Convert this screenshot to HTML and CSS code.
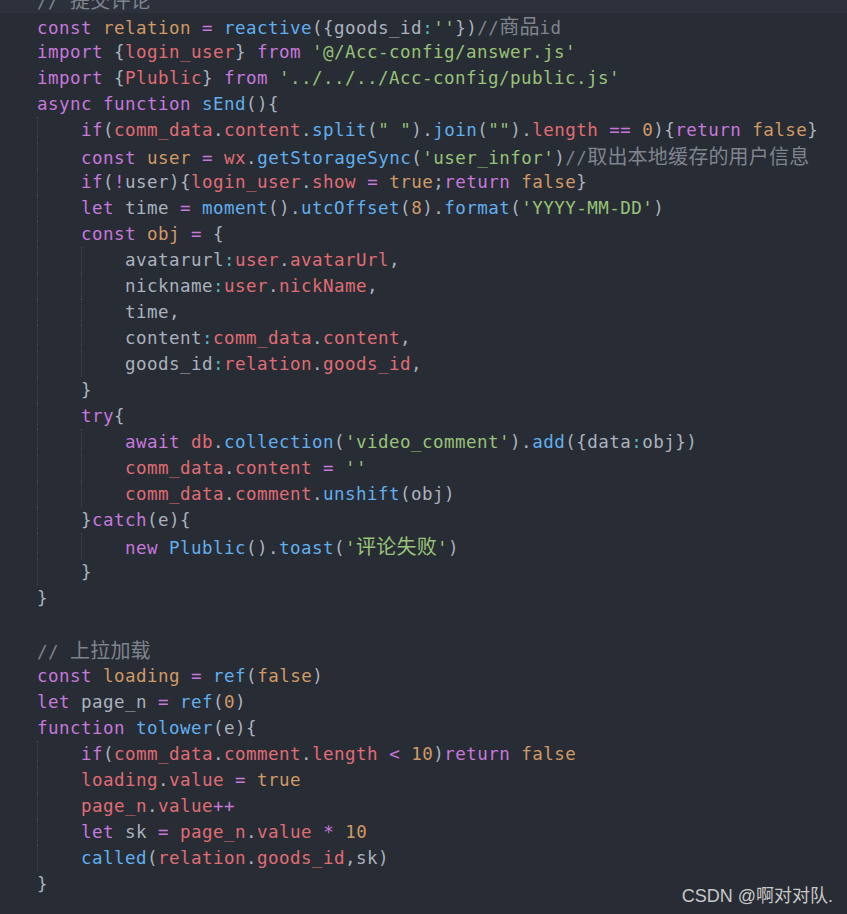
FILE: index.html
```html
<!DOCTYPE html>
<html lang="zh">
<head>
<meta charset="utf-8">
<title>code</title>
<link rel="stylesheet" href="styles.css">
</head>
<body>
<div class="editor">
<div class="code">
<div class="line cur"><span class="c">// <span class="zh">提交评论</span></span></div>
<div class="line"><span class="k">const</span> <span class="v">relation</span> <span class="o">=</span> <span class="f">reactive</span>({goods_id<span class="p">:</span><span class="s">''</span>})<span class="c">//<span class="zh">商品</span>id</span></div>
<div class="line"><span class="k">import</span> {<span class="r">login_user</span>} <span class="k">from</span> <span class="s">'@/Acc-config/answer.js'</span></div>
<div class="line"><span class="k">import</span> {<span class="r">Plublic</span>} <span class="k">from</span> <span class="s">'../../../Acc-config/public.js'</span></div>
<div class="line"><span class="k">async</span> <span class="k">function</span> <span class="f">sEnd</span>(){</div>
<div class="line"><span class="ind"></span><span class="k">if</span>(<span class="r">comm_data</span>.<span class="r">content</span>.<span class="f">split</span>(<span class="s">" "</span>).<span class="f">join</span>(<span class="s">""</span>).<span class="r">length</span> <span class="o">==</span> <span class="v">0</span>){<span class="k">return</span> <span class="v">false</span>}</div>
<div class="line"><span class="ind"></span><span class="k">const</span> <span class="v">user</span> <span class="o">=</span> <span class="r">wx</span>.<span class="f">getStorageSync</span>(<span class="s">'user_infor'</span>)<span class="c">//<span class="zh">取出本地缓存的用户信息</span></span></div>
<div class="line"><span class="ind"></span><span class="k">if</span>(<span class="o">!</span>user){<span class="r">login_user</span>.<span class="r">show</span> <span class="o">=</span> <span class="v">true</span>;<span class="k">return</span> <span class="v">false</span>}</div>
<div class="line"><span class="ind"></span><span class="k">let</span> time <span class="o">=</span> <span class="f">moment</span>().<span class="f">utcOffset</span>(<span class="v">8</span>).<span class="f">format</span>(<span class="s">'YYYY-MM-DD'</span>)</div>
<div class="line"><span class="ind"></span><span class="k">const</span> <span class="v">obj</span> <span class="o">=</span> {</div>
<div class="line"><span class="ind"></span><span class="ind"></span>avatarurl<span class="p">:</span><span class="r">user</span>.<span class="r">avatarUrl</span>,</div>
<div class="line"><span class="ind"></span><span class="ind"></span>nickname<span class="p">:</span><span class="r">user</span>.<span class="r">nickName</span>,</div>
<div class="line"><span class="ind"></span><span class="ind"></span>time,</div>
<div class="line"><span class="ind"></span><span class="ind"></span>content<span class="p">:</span><span class="r">comm_data</span>.<span class="r">content</span>,</div>
<div class="line"><span class="ind"></span><span class="ind"></span>goods_id<span class="p">:</span><span class="r">relation</span>.<span class="r">goods_id</span>,</div>
<div class="line"><span class="ind"></span>}</div>
<div class="line"><span class="ind"></span><span class="k">try</span>{</div>
<div class="line"><span class="ind"></span><span class="ind"></span><span class="k">await</span> <span class="r">db</span>.<span class="f">collection</span>(<span class="s">'video_comment'</span>).<span class="f">add</span>({data<span class="p">:</span>obj})</div>
<div class="line"><span class="ind"></span><span class="ind"></span><span class="r">comm_data</span>.<span class="r">content</span> <span class="o">=</span> <span class="s">''</span></div>
<div class="line"><span class="ind"></span><span class="ind"></span><span class="r">comm_data</span>.<span class="r">comment</span>.<span class="f">unshift</span>(obj)</div>
<div class="line"><span class="ind"></span>}<span class="k">catch</span>(e){</div>
<div class="line"><span class="ind"></span><span class="ind"></span><span class="k">new</span> <span class="f">Plublic</span>().<span class="f">toast</span>(<span class="s">'<span class="zh">评论失败</span>'</span>)</div>
<div class="line"><span class="ind"></span>}</div>
<div class="line">}</div>
<div class="line"> </div>
<div class="line"><span class="c">// <span class="zh">上拉加载</span></span></div>
<div class="line"><span class="k">const</span> <span class="v">loading</span> <span class="o">=</span> <span class="f">ref</span>(<span class="v">false</span>)</div>
<div class="line"><span class="k">let</span> page_n <span class="o">=</span> <span class="f">ref</span>(<span class="v">0</span>)</div>
<div class="line"><span class="k">function</span> <span class="f">tolower</span>(e){</div>
<div class="line"><span class="ind"></span><span class="k">if</span>(<span class="r">comm_data</span>.<span class="r">comment</span>.<span class="r">length</span> <span class="o">&lt;</span> <span class="v">10</span>)<span class="k">return</span> <span class="v">false</span></div>
<div class="line"><span class="ind"></span><span class="r">loading</span>.<span class="r">value</span> <span class="o">=</span> <span class="v">true</span></div>
<div class="line"><span class="ind"></span><span class="r">page_n</span>.<span class="r">value</span><span class="o">++</span></div>
<div class="line"><span class="ind"></span><span class="k">let</span> sk <span class="o">=</span> <span class="r">page_n</span>.<span class="r">value</span> <span class="o">*</span> <span class="v">10</span></div>
<div class="line"><span class="ind"></span><span class="f">called</span>(<span class="r">relation</span>.<span class="r">goods_id</span>,sk)</div>
<div class="line">}</div>
</div>
<div class="mark">CSDN @啊对对队.</div>
</div>
</body>
</html>
```
FILE: styles.css
```css
html, body {
  margin: 0;
  padding: 0;
  background: #282c34;
}
.editor {
  position: relative;
  width: 847px;
  height: 914px;
  overflow: hidden;
  background: #282c34;
}
.code {
  margin-top: -13px;
  font-family: "DejaVu Sans Mono", "Liberation Mono", "Noto Sans CJK SC", monospace;
  font-size: 17.5px;
  letter-spacing: 0.465px;
  line-height: 26px;
  color: #abb2bf;
}
.line {
  height: 26px;
  padding-left: 37px;
  white-space: pre;
}
.line.cur {
  background: #2c313c;
}
.ind {
  display: inline-block;
  width: 44px;
  height: 26px;
  vertical-align: top;
  box-sizing: border-box;
  border-left: 1px dotted #434956;
}
.zh {
  font-family: "Noto Sans CJK SC", sans-serif;
  font-size: 20px;
  letter-spacing: 0.2px;
}
.k { color: #c678dd; }
.o { color: #c678dd; }
.v { color: #d19a66; }
.f { color: #61afef; }
.s { color: #98c379; }
.r { color: #e06c75; }
.p { color: #56b6c2; }
.c { color: #7f848e; }
.mark {
  position: absolute;
  right: 14px;
  bottom: 7px;
  font-family: "Liberation Sans", "Noto Sans CJK SC", sans-serif;
  font-size: 18px;
  color: #c8c8c8;
}
```
